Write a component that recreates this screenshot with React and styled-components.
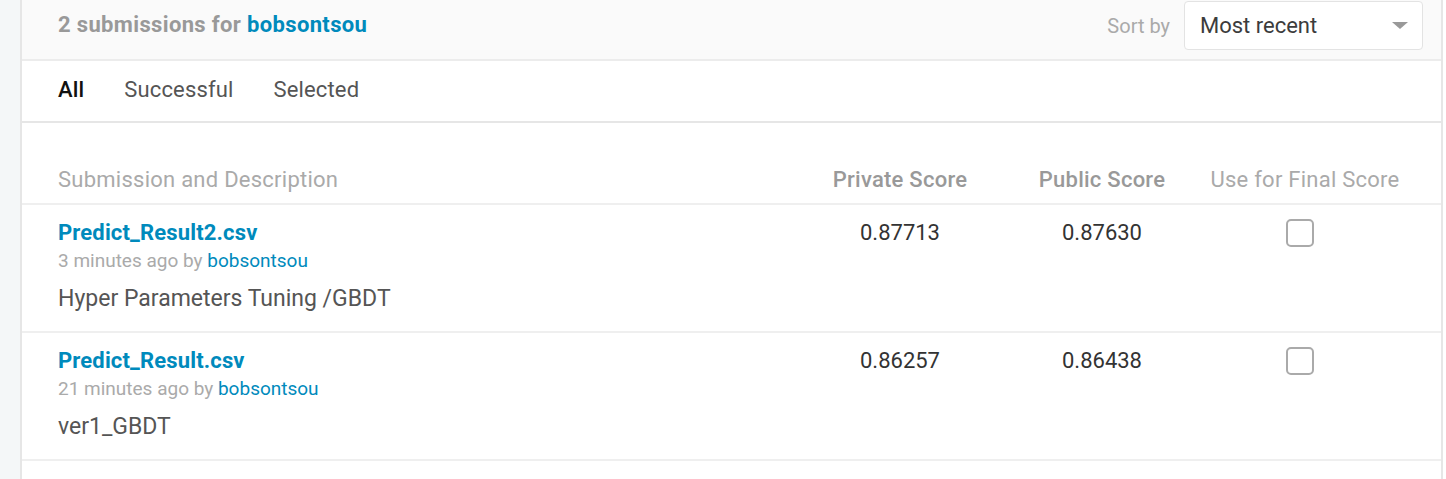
import React from "react";
import styled, { createGlobalStyle } from "styled-components";

const Global = createGlobalStyle`
  html, body { margin: 0; padding: 0; background: #fff; }
  body { font-family: Roboto, "Liberation Sans", Arial, sans-serif; }
`;

const Page = styled.div`
  display: flex;
  height: 479px;
  overflow: hidden;
`;

const Rail = styled.div`
  width: 20px;
  flex: none;
  background: #f4f7f8;
`;

const Panel = styled.div`
  width: 1419px;
  flex: none;
  border-left: 2px solid #e6e6e6;
  border-right: 2px solid #e6e6e6;
  background: #fff;
`;

const Header = styled.div`
  display: flex;
  align-items: flex-start;
  justify-content: space-between;
  height: 59px;
  background: #fafafa;
  border-bottom: 2px solid #ececec;
  padding: 0 18px 0 36px;
`;

const Title = styled.div`
  font-size: 22px;
  font-weight: 700;
  color: #999;
  line-height: 26px;
  letter-spacing: 0.35px;
  margin-top: 12px;
`;

const Link = styled.span`
  color: #008abc;
  font-weight: ${(p) => (p.$bold ? 700 : 400)};
`;

const SortGroup = styled.div`
  display: flex;
  align-items: center;
  gap: 14px;
  margin-top: 1px;
`;

const SortLabel = styled.span`
  font-size: 20px;
  color: #aaa;
`;

const Select = styled.div`
  width: 239px;
  height: 49px;
  box-sizing: border-box;
  border: 1px solid #e3e3e3;
  border-radius: 4px;
  background: #fff;
  display: flex;
  align-items: center;
  justify-content: space-between;
  padding: 0 14px 0 15px;
  font-size: 22px;
  color: #3c3c3c;
`;

const Caret = styled.span`
  width: 0;
  height: 0;
  border-left: 8px solid transparent;
  border-right: 8px solid transparent;
  border-top: 7px solid #999;
`;

const Tabs = styled.div`
  display: flex;
  align-items: center;
  gap: 40px;
  height: 56px;
  padding-bottom: 4px;
  border-bottom: 2px solid #e6e6e6;
  padding-left: 36px;
`;

const Tab = styled.span`
  font-size: 22px;
  letter-spacing: 0.15px;
  color: ${(p) => (p.$active ? "#111" : "#555")};
  font-weight: ${(p) => (p.$active ? 500 : 400)};
`;

const Grid = styled.div`
  display: grid;
  grid-template-columns: 1fr 202px 202px 204px;
  padding: 0 34px 0 36px;
  align-items: start;
  border-bottom: 2px solid #efefef;
  box-sizing: border-box;
`;

const HeadRow = styled(Grid)`
  height: 82px;
  align-items: end;
  padding-bottom: 10px;
`;

const Row = styled(Grid)`
  height: 128px;
  padding-top: 15px;
`;

const HeadCell = styled.div`
  font-size: 22px;
  letter-spacing: 0.25px;
  color: ${(p) => (p.$strong ? "#999" : "#aaa")};
  font-weight: ${(p) => (p.$strong ? 500 : 400)};
  text-align: ${(p) => (p.$left ? "left" : "center")};
  line-height: 26px;
`;

const Info = styled.div`
  display: flex;
  flex-direction: column;
`;

const FileName = styled.span`
  font-size: 22px;
  font-weight: 700;
  color: #008abc;
  line-height: 26px;
  letter-spacing: 0.15px;
`;

const Meta = styled.span`
  font-size: 19px;
  color: #aaa;
  line-height: 22px;
  margin-top: 4px;
`;

const Desc = styled.span`
  font-size: 23px;
  color: #555;
  line-height: 26px;
  margin-top: 14px;
`;

const Score = styled.div`
  font-size: 22px;
  font-weight: 400;
  color: #333;
  text-align: center;
  line-height: 26px;
`;

const CheckCell = styled.div`
  display: flex;
  justify-content: center;
  padding-right: 10px;
  margin-top: -1px;
`;

const Check = styled.span`
  width: 28px;
  height: 28px;
  box-sizing: border-box;
  border: 2px solid #aaa;
  border-radius: 5px;
  display: block;
`;

const submissions = [
  { file: "Predict_Result2.csv", ago: "3 minutes ago", desc: "Hyper Parameters Tuning /GBDT", priv: "0.87713", pub: "0.87630" },
  { file: "Predict_Result.csv", ago: "21 minutes ago", desc: "ver1_GBDT", priv: "0.86257", pub: "0.86438" },
];

export default function App() {
  return (
    <>
      <Global />
      <Page>
        <Rail />
        <Panel>
          <Header>
            <Title>
              2 submissions for <Link $bold>bobsontsou</Link>
            </Title>
            <SortGroup>
              <SortLabel>Sort by</SortLabel>
              <Select>
                Most recent
                <Caret />
              </Select>
            </SortGroup>
          </Header>
          <Tabs>
            <Tab $active>All</Tab>
            <Tab>Successful</Tab>
            <Tab>Selected</Tab>
          </Tabs>
          <HeadRow>
            <HeadCell $left>Submission and Description</HeadCell>
            <HeadCell $strong>Private Score</HeadCell>
            <HeadCell $strong>Public Score</HeadCell>
            <HeadCell>Use for Final Score</HeadCell>
          </HeadRow>
          {submissions.map((s) => (
            <Row key={s.file}>
              <Info>
                <FileName>{s.file}</FileName>
                <Meta>
                  {s.ago} by <Link>bobsontsou</Link>
                </Meta>
                <Desc>{s.desc}</Desc>
              </Info>
              <Score>{s.priv}</Score>
              <Score>{s.pub}</Score>
              <CheckCell>
                <Check />
              </CheckCell>
            </Row>
          ))}
        </Panel>
      </Page>
    </>
  );
}
